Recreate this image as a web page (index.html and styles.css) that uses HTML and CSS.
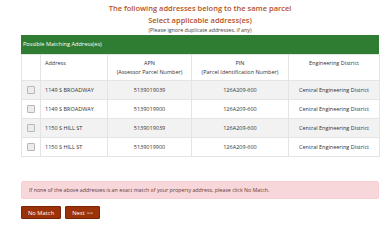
FILE: index.html
```html
<!DOCTYPE html>
<html lang="en">
<head>
  <meta charset="UTF-8" />
  <meta name="viewport" content="width=device-width, initial-scale=1.0" />
  <title>Parcel Addresses</title>
  <link rel="stylesheet" href="styles.css">
</head>
<body>
  <div class="page">
    <div class="heading">The following addresses belong to the same parcel</div>
    <div class="heading">Select applicable address(es)</div>
    <div class="note">(Please ignore duplicate addresses, if any)</div>

    <div class="panel">
      <div class="panel-title">Possible Matching Address(es)</div>
      <table class="matches">
        <colgroup>
          <col class="c-check">
          <col class="c-addr">
          <col class="c-apn">
          <col class="c-pin">
          <col class="c-dist">
        </colgroup>
        <thead>
          <tr>
            <th></th>
            <th class="left">Address</th>
            <th>APN<br>(Assessor Parcel Number)</th>
            <th>PIN<br>(Parcel Identification Number)</th>
            <th>Engineering District</th>
          </tr>
        </thead>
        <tbody>
          <tr class="shaded">
            <td><span class="check"></span></td>
            <td class="left">1149 S BROADWAY</td>
            <td>5139019039</td>
            <td>126A209-600</td>
            <td>Central Engineering District</td>
          </tr>
          <tr>
            <td><span class="check"></span></td>
            <td class="left">1149 S BROADWAY</td>
            <td>5139019900</td>
            <td>126A209-600</td>
            <td>Central Engineering District</td>
          </tr>
          <tr class="shaded">
            <td><span class="check"></span></td>
            <td class="left">1150 S HILL ST</td>
            <td>5139019039</td>
            <td>126A209-600</td>
            <td>Central Engineering District</td>
          </tr>
          <tr>
            <td><span class="check"></span></td>
            <td class="left">1150 S HILL ST</td>
            <td>5139019900</td>
            <td>126A209-600</td>
            <td>Central Engineering District</td>
          </tr>
        </tbody>
      </table>
    </div>

    <div class="alert">If none of the above addresses is an exact match of your property address, please click No Match.</div>

    <div class="actions">
      <button class="btn">No Match</button>
      <button class="btn">Next &gt;&gt;</button>
    </div>
  </div>
</body>
</html>
```

FILE: styles.css
```css
body {
  margin: 0;
  background: #fff;
  font-family: 'Open Sans', 'Liberation Sans', sans-serif;
  color: #333;
}

.page {
  padding: 2px 4px 0 21px;
}

.heading {
  text-align: center;
  font-size: 7.5px;
  font-weight: 600;
  line-height: 12px;
  color: #b4521f;
}

.note {
  text-align: center;
  font-size: 5.3px;
  line-height: 9px;
  color: #444;
}

.panel {
  width: 358px;
}

.panel-title {
  background: #2e7d32;
  color: #fff;
  font-size: 5.6px;
  height: 19px;
  line-height: 19px;
  padding-left: 2px;
}

.matches {
  width: 100%;
  border-collapse: collapse;
  table-layout: fixed;
  font-size: 5.5px;
}

.c-check { width: 19px; }
.c-addr { width: 67px; }
.c-apn { width: 84px; }
.c-pin { width: 97px; }
.c-dist { width: 91px; }

.matches th,
.matches td {
  border: 1px solid #e4e4e4;
  text-align: center;
  padding: 0 2px;
  font-weight: normal;
  white-space: nowrap;
  color: #333;
}

.matches th {
  vertical-align: top;
  height: 26px;
  padding-top: 4px;
  line-height: 9px;
  box-sizing: border-box;
}

.matches td {
  height: 18px;
  vertical-align: middle;
}

.matches .left {
  text-align: left;
  padding-left: 4px;
}

.matches .shaded td {
  background: #f2f2f2;
}

.check {
  display: inline-block;
  width: 6px;
  height: 6px;
  border: 1px solid #b8b8b8;
  border-radius: 1px;
  background: #ececec;
  vertical-align: middle;
}

.alert {
  margin-top: 24px;
  width: 358px;
  box-sizing: border-box;
  height: 18px;
  line-height: 16px;
  padding: 0 7px;
  background: #f8d7da;
  border: 1px solid #f6cdd1;
  border-radius: 2px;
  font-size: 5.3px;
  color: #5a3a3c;
}

.actions {
  display: flex;
  gap: 4px;
  margin-top: 7px;
}

.btn {
  background: #9b3209;
  color: #fff;
  border: 1px solid #7a2606;
  font-family: inherit;
  font-size: 5.8px;
  height: 13px;
  padding: 0 6px;
  border-radius: 1px;
  cursor: pointer;
}
```
